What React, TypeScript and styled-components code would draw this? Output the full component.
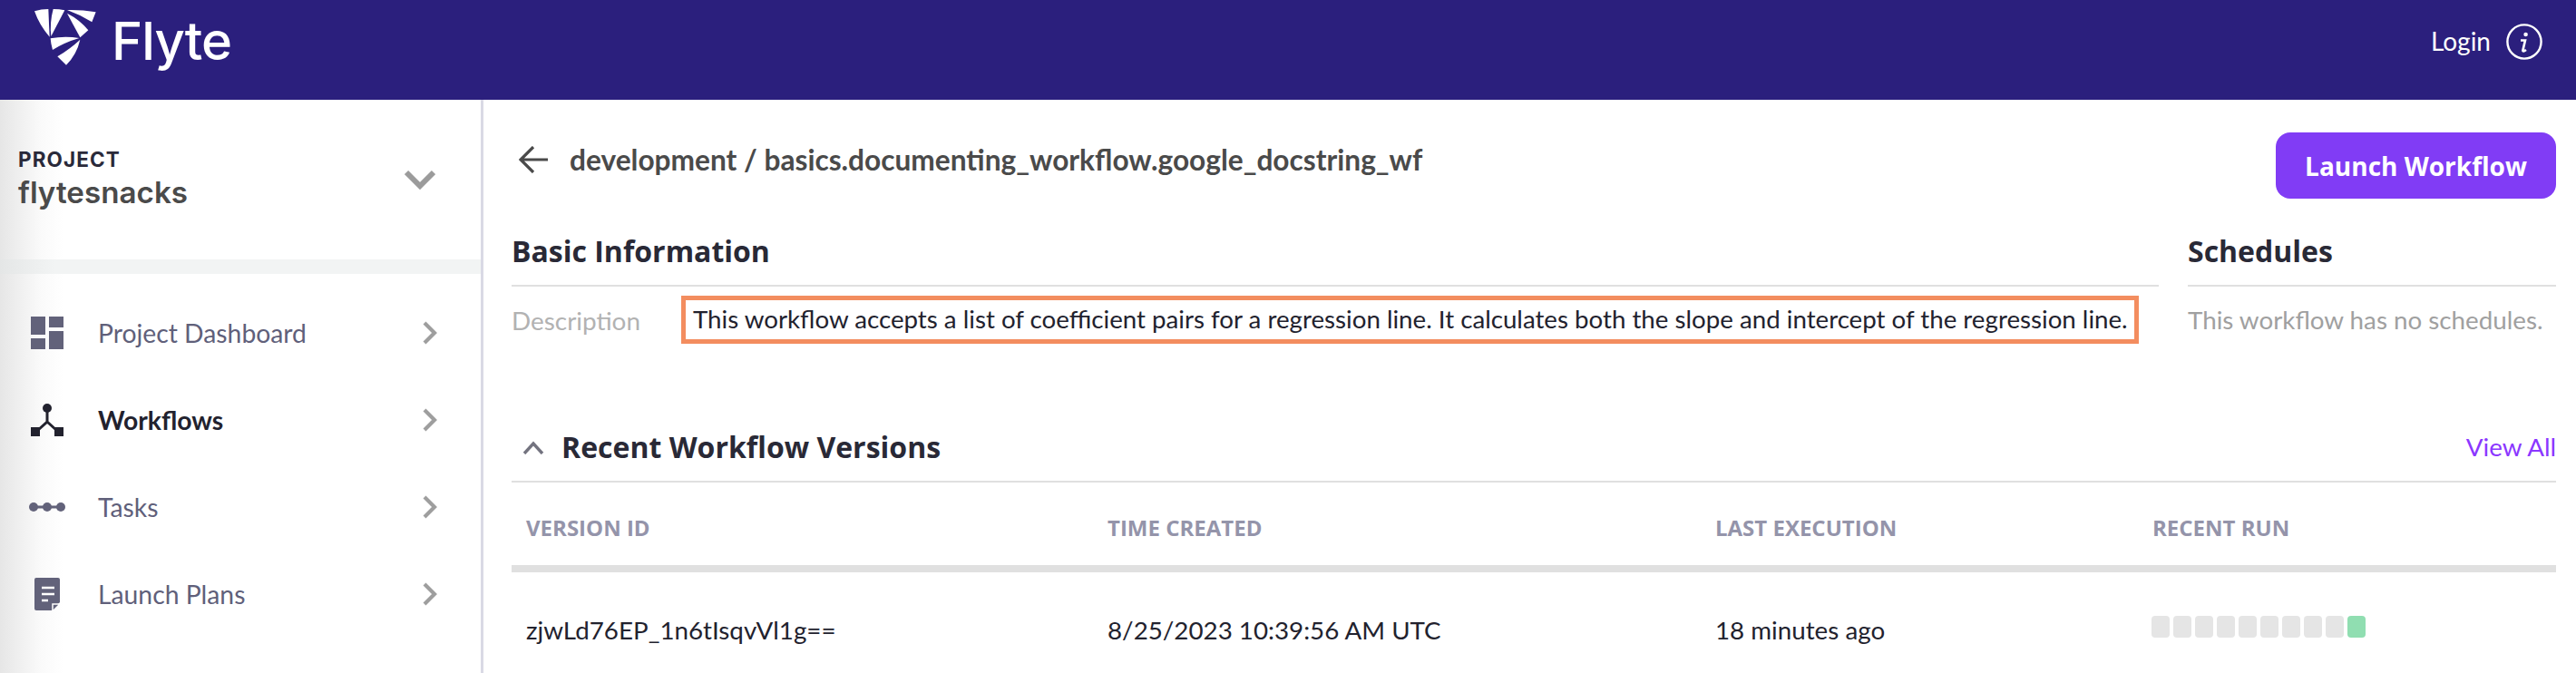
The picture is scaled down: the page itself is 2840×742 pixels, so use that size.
import React from "react";
import styled, { createGlobalStyle } from "styled-components";

const Global = createGlobalStyle`
  html, body { margin: 0; padding: 0; background: #fff; overflow: hidden; }
  * { box-sizing: border-box; }
`;
const Page = styled.div`
  width: 2840px; height: 742px; display: flex; flex-direction: column; overflow: hidden;
  font-family: "Lato", "Liberation Sans", sans-serif;
`;
const TopBar = styled.header`
  height: 110px; flex: none; background: #2b1f7d; color: #fff;
  display: flex; justify-content: space-between; align-items: flex-start;
  padding: 10px 37px 0 38px;
`;
const Brand = styled.div`display: flex; align-items: flex-start; gap: 17px;`;
const Wordmark = styled.div`
  font-family: "Inter", sans-serif; font-weight: 500; font-size: 58px; line-height: 70px; color: #fff;
  letter-spacing: -0.9px;
`;
const TopRight = styled.div`display: flex; align-items: center; gap: 17px; padding-top: 16px;`;
const LoginLabel = styled.span`font-size: 28px; line-height: 40px; color: #fff; margin-top: -2px;`;
const Body = styled.div`flex: 1; display: flex; min-height: 0;`;
const Sidebar = styled.aside`
  width: 533px; flex: none; border-right: 3px solid #d9d9e5;
  background: linear-gradient(90deg, #e6e6e6 0, #fafafa 45px, #fff 70px);
  display: flex; flex-direction: column;
`;
const ProjectBlock = styled.div`
  height: 176px; flex: none; display: flex; align-items: center; justify-content: space-between;
  padding: 2px 50px 0 20px;
`;
const ChevronSlot = styled.span`display: flex; margin-top: -2px;`;
const ProjectLabel = styled.div`
  font-family: "Inter", sans-serif; font-weight: 700; font-size: 22.5px; line-height: 26px; color: #2a2a3a;
  letter-spacing: 1.1px;
`;
const ProjectName = styled.div`
  font-family: "Inter", sans-serif; font-weight: 600; font-size: 33.2px; line-height: 46px; color: #4a4a4a;
`;
const Band = styled.div`
  height: 16px; flex: none;
  background: linear-gradient(90deg, #e4e6e6 0, #f2f4f4 60px);
`;
const Nav = styled.nav`padding-top: 17px; display: flex; flex-direction: column;`;
const NavRow = styled.div`
  height: 96px; display: flex; align-items: center; padding: 0 48px 0 32px;
`;
const NavIcon = styled.span`
  width: 40px; height: 40px; display: flex; align-items: center; justify-content: center; flex: none; margin-right: 36px;
`;
const NavText = styled.span<{ $active?: boolean }>`
  flex: 1; font-size: 28.3px; line-height: 40px;
  font-weight: ${(p) => (p.$active ? 700 : 400)};
  color: ${(p) => (p.$active ? "#22222e" : "#60607a")};
`;
const Main = styled.main`flex: 1; min-width: 0; padding: 36px 22px 0 31px; display: block;`;
const TitleRow = styled.div`display: flex; justify-content: space-between; align-items: flex-start;`;
const TitleLeft = styled.div`display: flex; align-items: center; gap: 24px; padding: 10px 0 0 8px;`;
const Title = styled.h1`
  margin: 0; font-size: 31.65px; line-height: 40px; font-weight: 700; color: #4a4a4a;
`;
const LaunchButton = styled.button`
  width: 309px; height: 73px; border: 0; border-radius: 16px; background: #813cf5; color: #fff;
  font-family: "Open Sans", sans-serif; font-weight: 700; font-size: 28px; margin-top: 0;
`;
const InfoRow = styled.div`display: flex; gap: 32px; margin-top: 36px;`;
const InfoColumn = styled.section<{ $wide?: boolean }>`
  ${(p) => (p.$wide ? "flex: 1;" : "width: 406px; flex: none;")}
  min-width: 0;
`;
const SectionHead = styled.h2`
  margin: 0; height: 61px; border-bottom: 2px solid #e0e0e0;
  font-family: "Open Sans", sans-serif; font-weight: 700; font-size: 32px; line-height: 44px; color: #292936;
`;
const DescRow = styled.div`display: flex; align-items: center; padding-top: 10px;`;
const DescLabel = styled.span`width: 187px; flex: none; font-size: 27.9px; line-height: 40px; color: #b2b2b2;`;
const DescBox = styled.div`
  width: 1607px; height: 53px; border: 5px solid #f38d5f; padding: 0 8px;
  font-size: 27.7px; line-height: 41px; color: #22222e; white-space: nowrap;
`;
const Muted = styled.p`margin: 0; padding-top: 17px; font-size: 27.75px; line-height: 40px; color: #a0a0a0; white-space: nowrap;`;
const RecentHead = styled.div`
  margin-top: 83px; height: 70px; border-bottom: 2px solid #e0e0e0;
  display: flex; justify-content: space-between; align-items: flex-start; padding: 9px 0 0 12px;
`;
const RecentTitleWrap = styled.div`display: flex; align-items: center; gap: 19px;`;
const RecentTitle = styled.h2`
  margin: 0; font-family: "Open Sans", sans-serif; font-weight: 700; font-size: 32px; line-height: 44px; color: #292936;
`;
const ViewAll = styled.a`font-size: 27.75px; line-height: 44px; color: #8b37ff;`;
const TableRow = styled.div<{ $head?: boolean }>`
  display: grid; grid-template-columns: 641px 670px 482px 1fr;
  padding-left: 16px; align-items: center;
  ${(p) => (p.$head ? "height: 99px; padding-top: 9px; border-bottom: 8px solid #e0e0e0;" : "height: 128px;")}
`;
const HeadCell = styled.div`
  font-family: "Open Sans", sans-serif; font-weight: 700; font-size: 24px; line-height: 30px; color: #9494aa;
`;
const Cell = styled.div`font-size: 27.75px; line-height: 40px; color: #22222e; white-space: nowrap;`;
const Bars = styled.div`display: flex; gap: 4px; margin: 0 0 8px -1px;`;
const Bar = styled.span<{ $ok?: boolean }>`
  width: 20px; height: 24px; border-radius: 4px; background: ${(p) => (p.$ok ? "#90deb1" : "#e5e5e5")};
`;

const Logo = () => (
  <svg width="68" height="62" viewBox="55 30 204 186" fill="#fff">
    <path d="M55 37Q78 30 101 30Q103 80 105 122Q72 85 55 37Z" />
    <path d="M117 30Q137 30 155 34L110 120Q105 75 117 30Z" />
    <path d="M163 33Q212 32 258 40L245 73Q205 48 163 33Z" />
    <path d="M163 44Q205 65 233 100L206 124Q185 85 163 44Z" />
    <path d="M108 127Q155 118 203 126Q155 140 115 165Q109 145 108 127Z" />
    <path d="M206 131Q195 180 160 215L131 187Q175 160 206 131Z" />
  </svg>
);
const InfoIcon = () => (
  <svg width="40" height="40" viewBox="0 0 40 40" fill="none">
    <circle cx="20" cy="20" r="18.6" stroke="#fff" strokeWidth="2.4" />
    <circle cx="21.6" cy="12" r="2.3" fill="#fff" />
    <path d="M16 18.5h5l-2.6 11c-.2 1.2 1 1.4 3.6-.5" stroke="#fff" strokeWidth="2.6" />
  </svg>
);
const DashIcon = () => (
  <svg width="36" height="36" viewBox="0 0 36 36" fill="#62627a">
    <rect x="0" y="0" width="16" height="20" />
    <rect x="0" y="24" width="16" height="12" />
    <rect x="20" y="0" width="16" height="12" />
    <rect x="20" y="16" width="16" height="20" />
  </svg>
);
const FlowIcon = () => (
  <svg width="36" height="36" viewBox="0 0 36 36" fill="#22222e">
    <circle cx="18" cy="5" r="5" />
    <path d="M18 8V20L7 30M18 20L29 30" stroke="#22222e" strokeWidth="3" fill="none" />
    <rect x="0" y="26" width="10" height="10" />
    <rect x="26" y="26" width="10" height="10" />
  </svg>
);
const TaskIcon = () => (
  <svg width="40" height="12" viewBox="0 0 40 12" fill="#62627a">
    <rect x="4" y="4.5" width="32" height="3" />
    <circle cx="5" cy="6" r="5" />
    <circle cx="20" cy="6" r="5" />
    <circle cx="35" cy="6" r="5" />
  </svg>
);
const PlanIcon = () => (
  <svg width="28" height="36" viewBox="0 0 28 36" fill="none">
    <path d="M2 0H26a2 2 0 0 1 2 2V27L19 36H2a2 2 0 0 1-2-2V2a2 2 0 0 1 2-2Z" fill="#62627a" />
    <path d="M8 11H22M8 18H22M8 25H15" stroke="#fff" strokeWidth="2.4" />
    <path d="M27 29V30L21 36H20V29Z" fill="#62627a" stroke="#fff" strokeWidth="1.5" />
  </svg>
);
const ChevronRight = () => (
  <svg width="16" height="26" viewBox="0 0 16 26" fill="none">
    <path d="M2 2L13 13L2 24" stroke="#9e9e9e" strokeWidth="4.2" />
  </svg>
);
const ChevronDown = () => (
  <svg width="34" height="23" viewBox="0 0 34 23" fill="none">
    <path d="M2 3L17 18L32 3" stroke="#9b9b9b" strokeWidth="6" />
  </svg>
);
const BackArrow = () => (
  <svg width="32" height="30" viewBox="0 0 32 30" fill="none">
    <path d="M32 15H3M16 1L2 15L16 29" stroke="#4a4a4a" strokeWidth="3.2" />
  </svg>
);
const ChevronUp = () => (
  <svg width="24" height="15" viewBox="0 0 24 15" fill="none">
    <path d="M2 14L12 3L22 14" stroke="#73737f" strokeWidth="3.4" />
  </svg>
);

const navItems = [
  { label: "Project Dashboard", icon: <DashIcon /> },
  { label: "Workflows", icon: <FlowIcon />, active: true },
  { label: "Tasks", icon: <TaskIcon /> },
  { label: "Launch Plans", icon: <PlanIcon /> },
];

export default function App() {
  return (
    <Page>
      <Global />
      <TopBar>
        <Brand>
          <Logo />
          <Wordmark>Flyte</Wordmark>
        </Brand>
        <TopRight>
          <LoginLabel>Login</LoginLabel>
          <InfoIcon />
        </TopRight>
      </TopBar>
      <Body>
        <Sidebar>
          <ProjectBlock>
            <div>
              <ProjectLabel>PROJECT</ProjectLabel>
              <ProjectName>flytesnacks</ProjectName>
            </div>
            <ChevronSlot>
              <ChevronDown />
            </ChevronSlot>
          </ProjectBlock>
          <Band />
          <Nav>
            {navItems.map((n) => (
              <NavRow key={n.label}>
                <NavIcon>{n.icon}</NavIcon>
                <NavText $active={n.active}>{n.label}</NavText>
                <ChevronRight />
              </NavRow>
            ))}
          </Nav>
        </Sidebar>
        <Main>
          <TitleRow>
            <TitleLeft>
              <BackArrow />
              <Title>development / basics.documenting_workflow.google_docstring_wf</Title>
            </TitleLeft>
            <LaunchButton>Launch Workflow</LaunchButton>
          </TitleRow>
          <InfoRow>
            <InfoColumn $wide>
              <SectionHead>Basic Information</SectionHead>
              <DescRow>
                <DescLabel>Description</DescLabel>
                <DescBox>This workflow accepts a list of coefficient pairs for a regression line. It calculates both the slope and intercept of the regression line.</DescBox>
              </DescRow>
            </InfoColumn>
            <InfoColumn>
              <SectionHead>Schedules</SectionHead>
              <Muted>This workflow has no schedules.</Muted>
            </InfoColumn>
          </InfoRow>
          <RecentHead>
            <RecentTitleWrap>
              <ChevronUp />
              <RecentTitle>Recent Workflow Versions</RecentTitle>
            </RecentTitleWrap>
            <ViewAll>View All</ViewAll>
          </RecentHead>
          <TableRow $head>
            <HeadCell>VERSION ID</HeadCell>
            <HeadCell>TIME CREATED</HeadCell>
            <HeadCell>LAST EXECUTION</HeadCell>
            <HeadCell>RECENT RUN</HeadCell>
          </TableRow>
          <TableRow>
            <Cell>zjwLd76EP_1n6tIsqvVl1g==</Cell>
            <Cell>8/25/2023 10:39:56 AM UTC</Cell>
            <Cell>18 minutes ago</Cell>
            <Bars>
              {Array.from({ length: 10 }, (_, i) => (
                <Bar key={i} $ok={i === 9} />
              ))}
            </Bars>
          </TableRow>
        </Main>
      </Body>
    </Page>
  );
}
